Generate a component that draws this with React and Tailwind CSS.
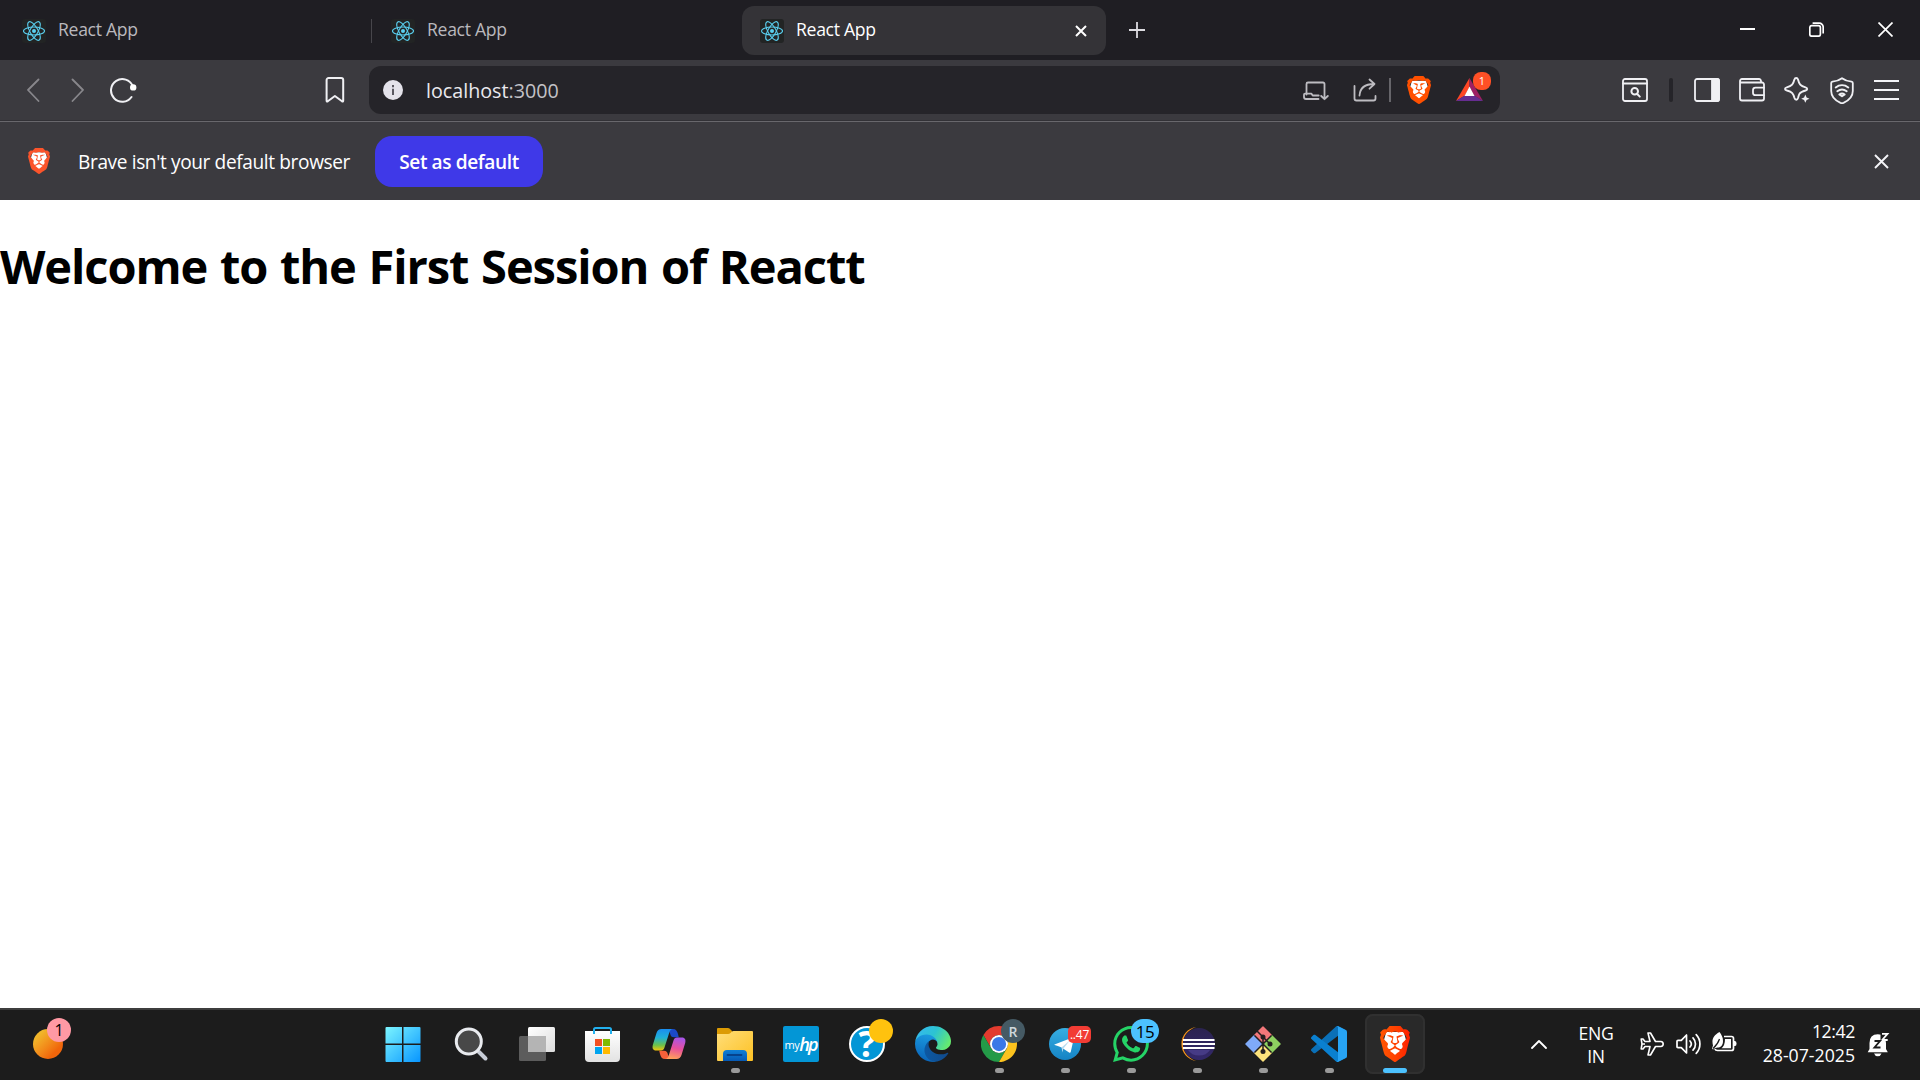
import { SiBrave, SiWhatsapp } from "react-icons/si";

const FONT = "font-['Segoe_UI','Open_Sans','Noto_Sans',sans-serif]";

function ReactIcon() {
  return (
    <svg className="h-6 w-6 shrink-0 rounded-[3px] bg-[#222424]" viewBox="0 0 24 24" fill="none" stroke="#5ad0f0" strokeWidth="1.1">
      <ellipse cx="12" cy="12" rx="10.5" ry="4" />
      <ellipse cx="12" cy="12" rx="10.5" ry="4" transform="rotate(60 12 12)" />
      <ellipse cx="12" cy="12" rx="10.5" ry="4" transform="rotate(120 12 12)" />
      <circle cx="12" cy="12" r="2" fill="#5ad0f0" stroke="none" />
    </svg>
  );
}

function BraveLogo({ className, fill }) {
  return (
    <svg className={className} viewBox="1.8 0 20.4 24" preserveAspectRatio="none">
      <defs>
        <linearGradient id="braveRed" x1="0" x2="1">
          <stop offset="0" stopColor="#ff5601" />
          <stop offset=".55" stopColor="#ff4000" />
          <stop offset="1" stopColor="#ff1f01" />
        </linearGradient>
      </defs>
      <polygon points="6,4 18,4 19.4,9 16.5,17 12,20.8 7.5,17 4.6,9" fill="#fff" />
      <SiBrave size={24} fill={fill} />
    </svg>
  );
}

function Tab({ active, className = "" }) {
  return (
    <div className={`flex h-[49px] items-center rounded-xl pl-[18px] ${active ? "bg-[#343337] text-white" : "text-[#b9b8bd]"} ${className}`}>
      <ReactIcon />
      <span className="mb-[3px] ml-3 text-[17.6px] leading-6 tracking-[-0.3px]">React App</span>
      {active && (
        <svg className="mr-[19px] ml-auto h-3 w-3" viewBox="0 0 12 12" stroke="#fff" strokeWidth="2">
          <path d="M1 1l10 10M11 1L1 11" />
        </svg>
      )}
    </div>
  );
}

function TabStrip() {
  return (
    <div className="flex h-[60px] items-start bg-[#1f1e23] pt-[6px]">
      <Tab className="ml-1 w-[367px]" />
      <div className="mt-[13px] h-6 w-px bg-[#47464b]" />
      <Tab className="ml-px w-[365px]" />
      <Tab active className="ml-1 w-[364px]" />
      <svg className="mt-4 ml-[23px] h-4 w-4" viewBox="0 0 16 16" stroke="#dddce1" strokeWidth="1.8">
        <path d="M8 0v16M0 8h16" />
      </svg>
      <div className="mt-4 mr-[27px] ml-auto flex gap-[54px]">
        <svg className="h-4 w-[15px]" viewBox="0 0 15 16"><path d="M0 7h15" stroke="#fff" strokeWidth="2" /></svg>
        <svg className="h-[15px] w-[15px]" viewBox="0 0 15 15" fill="none" stroke="#fff" strokeWidth="1.7">
          <rect x=".8" y="3.6" width="10.6" height="10.6" rx="2" />
          <path d="M3.6 1.2h6.6a4 4 0 0 1 4 4v6.2" />
        </svg>
        <svg className="h-[15px] w-[15px]" viewBox="0 0 15 15" stroke="#fff" strokeWidth="1.7">
          <path d="M.5.5l14 14M14.5.5l-14 14" />
        </svg>
      </div>
    </div>
  );
}

const line = { fill: "none", stroke: "#f0f0f4", strokeWidth: 1.8, strokeLinejoin: "round", strokeLinecap: "round" };

function Toolbar() {
  return (
    <div className="flex h-[61px] items-center bg-[#3b3a3f] pb-px">
      <svg className="ml-[26px] h-6 w-[14px]" viewBox="0 0 14 24" {...line} stroke="#88878c"><path d="M12.5 1.5L2 12l10.5 11" /></svg>
      <svg className="ml-[31px] h-6 w-[14px]" viewBox="0 0 14 24" {...line} stroke="#88878c"><path d="M1.5 1.5L12 12 1.5 23" /></svg>
      <svg className="mb-px ml-[25px] h-[26px] w-[27px]" viewBox="0 0 27 26" {...line} strokeWidth="2">
        <path d="M21.5 20A11.3 11.3 0 1 1 22.8 9.2" />
        <circle cx="23.2" cy="10.4" r="3.2" fill="#fff" stroke="none" />
      </svg>
      <svg className="ml-[188px] h-[26px] w-5" viewBox="0 0 20 26" {...line} strokeWidth="2">
        <path d="M1.6 3a2 2 0 0 1 2-2h12.6a2 2 0 0 1 2 2v20.8q0 1.2-1.2.5L9.9 19l-7.1 5.3q-1.2.7-1.2-.5z" />
      </svg>

      <div className="ml-6 flex h-12 w-[1131px] items-center rounded-xl bg-[#252429] pl-[14px]">
        <svg className="h-5 w-5" viewBox="0 0 20 20">
          <circle cx="10" cy="10" r="10" fill="#e4e2ea" />
          <path d="M9 5h2v2.2H9zM9 8.800h2V15H9z" fill="#5a5860" />
        </svg>
        <span className="mt-px ml-[23px] text-[19.700px] leading-7 text-[#c3c2c7]"><span className="text-[#eae9ee]">localhost</span>:3000</span>
        <svg className="mt-px ml-auto h-[20px] w-[26px]" viewBox="0 0 26 20" {...line} stroke="#bdbcc1">
          <path d="M21.500 9.500V3a1.500 1.500 0 0 0-1.500-1.500H5A1.500 1.500 0 0 0 3.500 3v10.500M3.500 12.700H2a1 1 0 0 0-1 1V16a2 2 0 0 0 2 2h12.500M3.500 12.700h5l1.200 1.800h6M21.500 9.500v8.500M18.200 15l3.300 3.200 3.300-3.200" />
        </svg>
        <svg className="ml-6 h-6 w-[26px]" viewBox="0 0 26 24" {...line} stroke="#bdbcc1">
          <path d="M1.500 8v12.500a2 2 0 0 0 2 2h17a2 2 0 0 0 2-2V18M6.500 17.500C7 10.500 11 6 21 6M16.500 1.500L21.500 6l-5 4.700" />
        </svg>
        <div className="ml-[10px] h-6 w-[2px] bg-[#66656a]" />
        <BraveLogo className="ml-4 h-7 w-6" fill="#ff5000" />
        <div className="relative mr-[17px] ml-[25px] h-6 w-[27px]">
          <svg className="h-[23px] w-[27px]" viewBox="0 0 27 23">
            <path d="M13.500 0L0 23l9-5.500 4.500-8.500z" fill="#ff4724" />
            <path d="M13.500 0L27 23l-9-5.500L13.500 9z" fill="#9e1f63" />
            <path d="M0 23h27l-8.500-5.500H8.500z" fill="#662d91" />
            <path d="M13.500 8.500l5 9.500H8.500z" fill="#fff" />
          </svg>
          <span className="absolute -top-[6px] left-[17px] flex h-[18px] w-[18px] items-center justify-center rounded-[8px] bg-[#ff5026] text-[11px] text-white">1</span>
        </div>
      </div>

      <svg className="ml-[122px] h-6 w-[26px]" viewBox="0 0 26 24" {...line}>
        <rect x="1" y="1" width="24" height="22" rx="2" />
        <path d="M1 5.500h24" />
        <circle cx="12.700" cy="13.200" r="3.300" strokeWidth="2" /><path d="M15.200 16l2.600 2.600" strokeWidth="2" />
      </svg>
      <div className="ml-[21px] h-6 w-[4px] rounded-sm bg-[#252429]" />
      <svg className="ml-[21px] h-6 w-[26px]" viewBox="0 0 26 24" {...line}>
        <rect x="1" y="1" width="24" height="22" rx="2" />
        <path d="M18 1h5a2 2 0 0 1 2 2v18a2 2 0 0 1-2 2h-5z" fill="#f0f0f4" />
      </svg>
      <svg className="ml-[19px] h-6 w-[26px]" viewBox="0 0 26 24" {...line}>
        <path d="M22 4.500V3a2 2 0 0 0-2-2H3a2 2 0 0 0-2 2v17.500a2 2 0 0 0 2 2h20a2 2 0 0 0 2-2V6.500a2 2 0 0 0-2-2H2" />
        <path d="M25 9.700h-8.500a2.500 2.500 0 0 0-2.500 2.500v2.500a2.500 2.500 0 0 0 2.500 2.500H25" />
      </svg>
      <svg className="ml-[19px] h-[26px] w-[26px]" viewBox="0 0 26 26" {...line} strokeWidth="1.900">
        <path d="M12.200 1c1 0 1.500.6 1.800 1.600 1.100 4.500 2.300 6.300 7.500 7.700 1.200.4 1.700.9 1.700 1.600s-.6 1.200-1.700 1.600c-3 .9-4.900 1.700-6 3.200-.7 1-1 2.500-1.500 4.400-.3 1-.8 1.600-1.700 1.600s-1.500-.6-1.800-1.600c-1.200-4.600-2.300-6.200-7.500-7.600C1.700 13.100 1 12.600 1 11.900s.6-1.200 1.800-1.600c5.200-1.400 6.500-3.300 7.600-7.700.3-1 .9-1.600 1.800-1.600z" />
        <path d="M21.300 17.500l1.300 2.900 2.900 1.300-2.900 1.300-1.300 2.700-1.200-2.700-2.900-1.300 2.900-1.300z" fill="#f0f0f4" stroke="none" />
      </svg>
      <svg className="ml-[20px] h-[27px] w-[24px]" viewBox="0 0 24 27" {...line}>
        <path d="M12 1.200c3 2.300 6 3.100 9.500 3.400.8.100 1.300.6 1.300 1.400V14c0 5.500-4 9.500-9.300 11.800q-1.500.6-3 0C5.200 23.500 1.200 19.500 1.200 14V6c0-.8.500-1.300 1.300-1.400C6 4.300 9 3.500 12 1.200z" />
        <path d="M5.700 10.500c3.800-3 8.800-3 12.600 0M7.300 14.200c2.900-2.200 6.500-2.200 9.400 0M9.300 17.500c1.700-1.200 3.700-1.200 5.400 0L12 19.300z" strokeWidth="1.900" />
      </svg>
      <svg className="ml-[20px] h-5 w-[25px]" viewBox="0 0 25 20" stroke="#f4f4f8" strokeWidth="2"><path d="M0 1h25M0 10h25M0 19h25" /></svg>
    </div>
  );
}

function InfoBar() {
  return (
    <div className="flex h-[79px] items-center border-t border-[#68676c] bg-[#3b3a3f] shadow-[0_-1px_0_#323136]">
      <BraveLogo className="ml-[28px] h-[26px] w-[22px]" fill="#fb542b" />
      <span className="mt-px ml-[28px] w-[297px] text-[19.100px] leading-7 tracking-[-0.380px] whitespace-nowrap text-white">Brave isn't your default browser</span>
      <button className="mt-px h-[51px] w-[168px] rounded-[17px] bg-[#3f39e8] text-[19.100px] leading-7 font-semibold tracking-[-0.400px] text-white">Set as default</button>
      <svg className="mr-[31px] ml-auto h-[15px] w-[15px]" viewBox="0 0 15 15" stroke="#f4f4f8" strokeWidth="1.900"><path d="M1 1l13 13M14 1L1 14" /></svg>
    </div>
  );
}

const art = "h-9 w-9";

const StartArt = () => (
  <svg className="-ml-[4px] h-9 w-9" viewBox="0 0 36 36">
    <defs><linearGradient id="win" x1="0" y1="0" x2="1" y2="1"><stop offset="0" stopColor="#7cf5ff" /><stop offset="1" stopColor="#0795ff" /></linearGradient></defs>
    <path d="M1.500 1H17v16.500H.5V2q0-1 1-1zM18.500 1H34.500q1 0 1 1V17.500h-17zM.5 19H17v17H1.500q-1 0-1-1zM18.500 19h17V35q0 1-1 1h-16z" fill="url(#win)" />
  </svg>
);

const SearchArt = () => (
  <svg className="-ml-px h-9 w-9" viewBox="0 0 36 36">
    <path d="M26 26l6.500 6.500" stroke="#c7ccd6" strokeWidth="4" strokeLinecap="round" />
    <circle cx="15.800" cy="15.500" r="12.500" fill="#484848" stroke="#e9ebef" strokeWidth="3" />
  </svg>
);

const TaskViewArt = () => (
  <svg className={art} viewBox="0 0 36 36">
    <defs><linearGradient id="tv" x1="0" y1="0" x2="1" y2="1"><stop offset="0" stopColor="#fff" /><stop offset="1" stopColor="#dcdcdc" /></linearGradient></defs>
    <rect x="9" y="1" width="27" height="25" rx="1.500" fill="url(#tv)" />
    <rect x="0" y="10" width="27" height="25" rx="1.500" fill="#5c5c5c" />
    <rect x="9" y="10" width="18" height="16" fill="#b4b4b4" />
  </svg>
);

const StoreArt = () => (
  <svg className={art} viewBox="0 0 36 36">
    <defs><linearGradient id="store" x1="0" y1="0" x2="0" y2="1"><stop offset="0" stopColor="#fff" /><stop offset="1" stopColor="#e2e2e2" /></linearGradient></defs>
    <path d="M0 5h35v27q0 4-4 4H4q-4 0-4-4z" fill="url(#store)" />
    <path d="M9 8V3.500Q9 2 10.500 2h14Q26 2 26 3.500V8" fill="none" stroke="#22b0ee" strokeWidth="2" />
    <path d="M10 13h7v7h-7z" fill="#f25022" /><path d="M18 13h7v7h-7z" fill="#7fba00" />
    <path d="M10 21h7v7h-7z" fill="#00a4ef" /><path d="M18 21h7v7h-7z" fill="#ffb900" />
  </svg>
);

const CopilotArt = () => (
  <svg className={art} viewBox="0 0 36 36">
    <defs>
      <linearGradient id="copA" x1="0" y1="0" x2="0" y2="1"><stop offset="0" stopColor="#1a8df0" /><stop offset=".4" stopColor="#1fb0d8" /><stop offset=".75" stopColor="#6cc24a" /><stop offset="1" stopColor="#f2c50c" /></linearGradient>
      <linearGradient id="copB" x1=".6" y1="0" x2=".4" y2="1"><stop offset="0" stopColor="#a855e8" /><stop offset=".5" stopColor="#e8509c" /><stop offset="1" stopColor="#ffa05a" /></linearGradient>
    </defs>
    <path d="M17 3h5c3 0 4.200 2 5 5l.8 3.200H23c-2.500 0-3.200-1-4-4z" fill="#1b49c9" />
    <path d="M19 33h-5c-3 0-4.200-2-5-5l-.8-3.200H13c2.500 0 3.200 1 4 4z" fill="#f4603a" />
    <path d="M10.500 3H22c-2 0-3 1.300-3.700 3.500l-4.800 15c-.8 2.200-1.600 3-3.500 3H5c-3 0-4-2.300-3.200-5.500L5.500 7c.9-2.700 2.500-4 5-4z" fill="url(#copA)" />
    <path d="M25.500 33H14c2 0 3-1.300 3.700-3.500l4.800-15c.8-2.200 1.600-3 3.500-3h5c3 0 4 2.300 3.200 5.500L30.500 29c-.9 2.700-2.500 4-5 4z" fill="url(#copB)" />
  </svg>
);

const FolderArt = () => (
  <svg className={art} viewBox="0 0 36 36">
    <defs>
      <linearGradient id="fold" x1="0" y1="0" x2="1" y2="1"><stop offset="0" stopColor="#ffde7a" /><stop offset="1" stopColor="#fdc123" /></linearGradient>
      <linearGradient id="foldB" x1="0" y1="0" x2="0" y2="1"><stop offset="0" stopColor="#0f7fd6" /><stop offset="1" stopColor="#0659b4" /></linearGradient>
    </defs>
    <path d="M0 3q0-1 1-1h10q1 0 1.800.8L15 5v6H0z" fill="#dc9b04" />
    <path d="M0 8h11q1.500 0 2.500-1l1.500-1.500q.5-.5 1.500-.5H35q1 0 1 1v28q0 1-1 1H1q-1 0-1-1z" fill="url(#fold)" />
    <path d="M6 35v-7q0-4 4-4h16q4 0 4 4v7z" fill="url(#foldB)" />
    <path d="M10.500 29h14" stroke="#06428c" strokeWidth="1.800" strokeLinecap="round" />
  </svg>
);

const MyHpArt = () => (
  <div className="flex h-9 w-9 items-center justify-center rounded-[2px] bg-[#0396d6] pr-px text-white">
    <span className="text-[11px] leading-none tracking-[-0.500px]">my</span>
    <span className="text-[18px] leading-none font-semibold tracking-[-2px] italic">hp</span>
  </div>
);

const HelpArt = () => (
  <div className="flex h-9 w-9 items-center justify-center rounded-full border-2 border-white bg-[#0396d6] text-[36px] leading-none font-bold text-white">?</div>
);

const EdgeArt = () => (
  <svg className={art} viewBox="0 0 256 256">
    <defs>
      <linearGradient id="ed1" x1="0" x2="1"><stop offset="0" stopColor="#0c59a4" /><stop offset="1" stopColor="#114a8b" /></linearGradient>
      <linearGradient id="ed2" x1=".6" y1="0" x2=".4" y2="1"><stop offset="0" stopColor="#1b9de2" /><stop offset="1" stopColor="#0a63b8" /></linearGradient>
      <linearGradient id="ed3" x1="0" y1=".2" x2="1" y2=".6"><stop offset="0" stopColor="#35b8f0" /><stop offset=".5" stopColor="#2cc3d2" /><stop offset="1" stopColor="#66eb6e" /></linearGradient>
    </defs>
    <g transform="translate(-4.630 -4.920)">
      <path fill="url(#ed1)" d="M235.680 195.460a93.730 93.730 0 0 1-10.540 4.710 101.870 101.870 0 0 1-35.900 6.460c-47.320 0-88.540-32.550-88.540-74.320A31.480 31.480 0 0 1 117.130 104.600c-42.800 1.800-53.800 46.400-53.800 72.530 0 73.880 68.090 81.370 82.760 81.370 7.910 0 19.840-2.300 27-4.560l1.310-.44a128.340 128.340 0 0 0 66.600-52.800 4 4 0 0 0-5.320-5.240z" />
      <path fill="url(#ed2)" d="M110.340 246.340A79.200 79.200 0 0 1 87.600 225a80.720 80.720 0 0 1 29.530-120.400c3.120-1.470 8.450-4.130 15.540-4a32.350 32.350 0 0 1 25.690 13 31.880 31.880 0 0 1 6.360 18.660c0-.21 24.460-79.600-80-79.600-43.900 0-80 41.660-80 78.210a130.150 130.150 0 0 0 12.110 56 128 128 0 0 0 156.380 67.110 75.550 75.550 0 0 1-62.780-8z" />
      <path fill="url(#ed3)" d="M156.940 153.800c-.81 1.050-3.300 2.500-3.300 5.660 0 2.610 1.700 5.120 4.720 7.230 14.380 10 41.490 8.680 41.560 8.680a59.560 59.560 0 0 0 30.270-8.350 61.380 61.380 0 0 0 30.430-52.880c.26-22.410-8-37.310-11.340-43.910-21.190-41.450-66.930-65.290-116.670-65.290a128 128 0 0 0-128 126.200c.48-36.540 36.800-66.050 80-66.050 3.500 0 23.460.34 42 10.070 16.340 8.580 24.900 18.940 30.850 29.210 6.180 10.670 7.280 24.150 7.280 29.520s-2.740 13.330-7.800 19.910z" />
    </g>
  </svg>
);

const ChromeArt = () => (
  <svg className={art} viewBox="0 0 48 48">
    <path d="M24 12H44.780A24 24 0 0 0 3.210 12L13.610 30A12 12 0 0 1 24 12z" fill="#e33b2e" />
    <path d="M3.210 12A24 24 0 0 0 24 48L34.390 30A12 12 0 0 1 13.610 30z" fill="#249a48" />
    <path d="M24 48A24 24 0 0 0 44.780 12H24A12 12 0 0 1 34.390 30z" fill="#fcc31e" />
    <circle cx="24" cy="24" r="12" fill="#fff" />
    <circle cx="24" cy="24" r="9.500" fill="#3b78e7" />
  </svg>
);

const TelegramArt = () => (
  <svg className={art} viewBox="0 0 36 36">
    <defs><linearGradient id="tg" x1="0" y1="0" x2="0" y2="1"><stop offset="0" stopColor="#37aee2" /><stop offset="1" stopColor="#1583c4" /></linearGradient></defs>
    <circle cx="18" cy="18" r="16" fill="url(#tg)" />
    <path d="M7.500 18.500L25.500 11.500q1.500-.4 1.200 1.200L23.800 25.800q-.4 1.400-1.700.7L14.500 21.500l-3-1.200-3.800-1.200q-.7-.3-.2-.6z" fill="#fff" />
    <path d="M14.500 21.500l8.500-7.300-6.700 8.500-.8 3.800z" fill="#b9dcf0" />
  </svg>
);

const EclipseArt = () => (
  <svg className={art} viewBox="0 0 36 36">
    <defs><linearGradient id="ecl" x1="0" y1="0" x2="0" y2="1"><stop offset="0" stopColor="#2b2350" /><stop offset="1" stopColor="#33286a" /></linearGradient></defs>
    <path d="M17 1A17.200 17.200 0 0 0 17 35Q4 30 4 18T17 1z" fill="#f7941e" />
    <circle cx="20" cy="18" r="16" fill="url(#ecl)" />
    <path d="M9 24h22q-3.500 5.500-11 5.500T9 24z" fill="#463b85" />
    <path d="M4 14h31.500M3.700 18h32.300M4 22h31.500" stroke="#fff" strokeWidth="2" />
  </svg>
);

const GitArt = () => (
  <svg className={art} viewBox="0 0 36 36" strokeLinejoin="round">
    <path d="M18 1l8 8-8 8-8-8z" fill="#f2777a" stroke="#f2777a" strokeWidth="1.500" />
    <path d="M9 10l8 8-8 8-8-8z" fill="#7faaf8" stroke="#7faaf8" strokeWidth="1.500" />
    <path d="M27 10l8 8-8 8-8-8z" fill="#8ed160" stroke="#8ed160" strokeWidth="1.500" />
    <path d="M18 19l8 8-8 8-8-8z" fill="#fce27c" stroke="#fce27c" strokeWidth="1.500" />
    <path d="M9.500 9.500l17 17M26.500 9.500l-17 17M11.500 4.500L18 11v14.500M18 11l7 7" stroke="#231f20" strokeWidth="1.500" fill="none" />
    <circle cx="18" cy="11" r="2.500" fill="#231f20" /><circle cx="25" cy="18" r="2.500" fill="#231f20" /><circle cx="18" cy="25.500" r="2.500" fill="#231f20" />
  </svg>
);

const CodeArt = () => (
  <svg className={art} viewBox="0 0 100 100">
    <path fill="#0a70b8" d="M96.460 10.800L75.860.88C73.470-.27 70.620.21 68.750 2.080L1.300 63.580c-1.810 1.650-1.810 4.510 0 6.160l5.510 5.010c1.490 1.350 3.720 1.450 5.320.24l81.230-61.620C96.090 11.300 100 13.250 100 16.670v-.24c0-2.400-1.370-4.580-3.540-5.630z" />
    <path fill="#0a80d0" d="M96.460 89.200L75.860 99.120c-2.390 1.150-5.240.67-7.110-1.200L1.300 36.420c-1.810-1.650-1.810-4.510 0-6.160l5.510-5.010c1.490-1.350 3.720-1.450 5.320-.24l81.230 61.620c2.730 2.070 6.640.12 6.640-3.300v.24c0 2.400-1.370 4.580-3.540 5.630z" />
    <path fill="#27a4f5" d="M75.860 99.130c-2.390 1.150-5.240.66-7.110-1.210 2.310 2.310 6.250.67 6.250-2.590V4.670c0-3.260-3.940-4.890-6.250-2.590 1.870-1.880 4.720-2.360 7.110-1.210l20.600 9.910A6.250 6.250 0 0 1 100 16.410V83.590c0 2.400-1.370 4.600-3.540 5.640z" />
  </svg>
);

const badge = "absolute flex items-center justify-center rounded-full";

const apps = [
  { id: "start", icon: <StartArt /> },
  { id: "search", icon: <SearchArt /> },
  { id: "taskview", icon: <TaskViewArt /> },
  { id: "store", icon: <StoreArt /> },
  { id: "copilot", icon: <CopilotArt /> },
  { id: "files", icon: <FolderArt />, open: true },
  { id: "myhp", icon: <MyHpArt /> },
  { id: "help", icon: <HelpArt />, badge: <span className={`${badge} top-[5px] left-8 h-6 w-6 bg-[#ffc20e]`} /> },
  { id: "edge", icon: <EdgeArt /> },
  { id: "chrome", icon: <ChromeArt />, open: true, badge: <span className={`${badge} top-[5px] left-8 h-6 w-6 bg-[#455a64] text-[14px] font-semibold text-[#cfd8dc]`}>R</span> },
  { id: "telegram", icon: <TelegramArt />, open: true, badge: <span className="absolute top-[12px] left-[33px] flex h-[17px] w-[23px] items-center justify-center rounded-[5px] bg-[#f23c34] text-[12px] leading-none tracking-[-0.200px] text-white">..47</span> },
  { id: "whatsapp", icon: <SiWhatsapp size={36} color="#25d366" />, open: true, badge: <span className={`${badge} top-[5px] left-[30px] h-6 w-7 bg-[#4cc2ff] text-[17px] leading-none tracking-[-0.500px] text-black`}>15</span> },
  { id: "eclipse", icon: <EclipseArt />, open: true },
  { id: "git", icon: <GitArt />, open: true },
  { id: "code", icon: <CodeArt />, open: true },
  { id: "brave", icon: <BraveLogo className="h-9 w-[30px]" fill="url(#braveRed)" />, active: true },
];

function Taskbar() {
  return (
    <footer className="flex h-[72px] items-start border-t-2 border-[#3d3d3d] bg-[#1c1c1c] pt-1 text-white">
      <div className="flex h-[60px] w-[375px] items-center pl-[33px]">
        <div className="relative h-[30px] w-[30px] rounded-full bg-linear-to-br from-[#f0b52a] from-20% to-[#f0650a] to-75%">
          <span className={`${badge} -top-[11px] left-[14px] h-6 w-6 bg-[#ff99a4] text-[16px] leading-none text-black`}>1</span>
        </div>
      </div>
      <div className="flex gap-[6px]">
        {apps.map((app) => (
          <div key={app.id} className={`relative flex h-[60px] w-[60px] items-center justify-center rounded-lg ${app.active ? "bg-[#292929] ring-2 ring-[#303030] ring-inset" : ""}`}>
            {app.icon}
            {app.badge}
            {app.open && <span className="absolute bottom-[1px] h-[5px] w-[9px] rounded-full bg-[#9a9a9a]" />}
            {app.active && <span className="absolute bottom-[1px] h-[5px] w-6 rounded-full bg-[#4cc2ff]" />}
          </div>
        ))}
      </div>
      <svg className="mt-[25px] ml-[106px] h-[10px] w-4" viewBox="0 0 16 10" fill="none" stroke="#fff" strokeWidth="1.800" strokeLinecap="round" strokeLinejoin="round"><path d="M1 9l7-7 7 7" /></svg>
      <div className="mt-2 ml-[22px] w-[54px] text-center text-[17.600px] leading-[23px] tracking-[-0.300px]">ENG<br />IN</div>
      <svg className="mt-[18px] ml-[17px] h-6 w-6" viewBox="0 0 24 24" fill="none" stroke="#fff" strokeWidth="1.600" strokeLinejoin="round">
        <path d="M10 14.500H5l-2 2.500H1.200L2 12 1.200 7H3l2 2.500h5L8 1h2.500l5 8.500h5.300q2.400.3 2.400 2.500t-2.400 2.500h-5.300l-5 8.500H8zM2 12h3" />
      </svg>
      <svg className="mt-[19px] ml-3 h-[22px] w-[25px]" viewBox="0 0 25 22" fill="none" stroke="#fff" strokeWidth="1.700" strokeLinejoin="round" strokeLinecap="round">
        <path d="M1 8.300q0-1 1-1h3.300L10.500 2v18l-5.200-5.300H2q-1 0-1-1zM14 8a4.500 4.500 0 0 1 0 6M17 4.800a9 9 0 0 1 0 12.400M20.200 1.700a13.500 13.500 0 0 1 0 18.600" />
      </svg>
      <svg className="mt-[17px] ml-[11px] h-[22px] w-[25px]" viewBox="0 0 25 22" fill="none">
        <path d="M12 5.500h7.500a2 2 0 0 1 2 2v10a2 2 0 0 1-2 2H5.500q-2 0-2.500-1.500" stroke="#fff" strokeWidth="1.700" />
        <path d="M13 8h6v9.200H9.500Q13 14.500 13 8z" fill="#fff" /><path d="M22 10h1q1.500 0 1.500 2.500T23 15h-1z" fill="#fff" />
        <path d="M7.500 1C9.500 4 11 6 11 10c0 4-2 6.500-5 6.500Q3 16.500 1 18.500L0 17.500l1-3C-.5 9 1 4.500 7.500 1z" fill="#fff" />
        <path d="M1 17.500Q6 13 7.500 8" stroke="#1c1c1c" strokeWidth="1.200" />
      </svg>
      <div className="mt-[5px] ml-[21px] w-[97px] text-right text-[17.700px] leading-6 whitespace-nowrap"><span className="tracking-[-0.400px]">12:42</span><br />28-07-2025</div>
      <svg className="mt-[18px] ml-3 h-[25px] w-[24px]" viewBox="0 0 24 25">
        <path d="M2.500 17v-6q0-8.500 8.300-8.700Q19 2.500 19 11v6l1.800 3.200H.7zM7 21.500h7.500q-1 2.800-3.700 2.800T7 21.500z" fill="#fff" />
        <path d="M13.500 0h9v9h-9z" fill="#1c1c1c" />
        <path d="M15 1.800h5.500l-5.300 6.200h5.500" fill="none" stroke="#fff" strokeWidth="1.800" />
        <path d="M7.500 9h5.500L7.500 15.500h6" fill="none" stroke="#1c1c1c" strokeWidth="1.900" />
      </svg>
    </footer>
  );
}

export default function App() {
  return (
    <div className={`flex h-screen w-full flex-col overflow-hidden bg-white ${FONT}`}>
      <TabStrip />
      <Toolbar />
      <InfoBar />
      <main className="flex-1 pt-[34px]">
        <h1 className="text-[47px] leading-[64px] font-bold tracking-[-1.080px] text-black [word-spacing:1.600px]">Welcome to the First Session of Reactt</h1>
      </main>
      <Taskbar />
    </div>
  );
}
